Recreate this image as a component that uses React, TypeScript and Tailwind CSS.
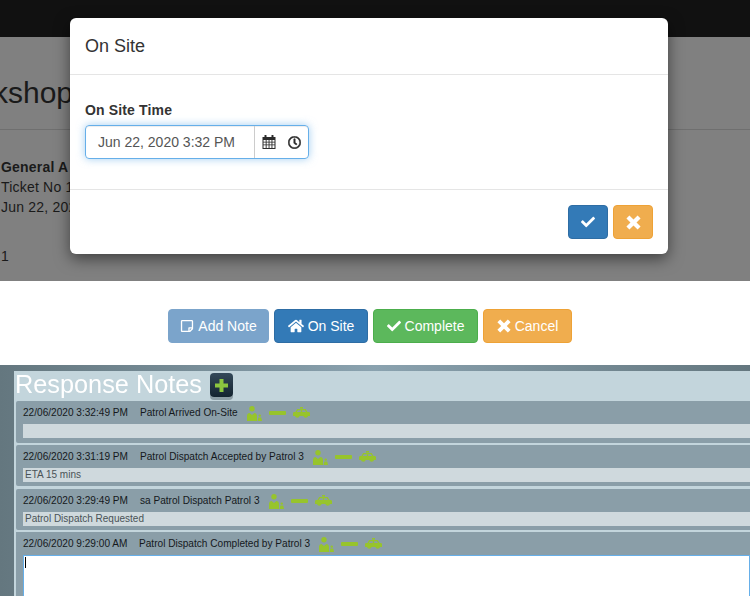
import React from "react";
import { FaCheck, FaHome, FaRegClock, FaRegStickyNote } from "react-icons/fa";

function Calendar() {
  return (
    <svg width="14" height="14" viewBox="0 0 14 14" fill="#2b2b2b">
      <rect x="2.5" y="0" width="2" height="3" rx="0.6" />
      <rect x="9.5" y="0" width="2" height="3" rx="0.6" />
      <path d="M0.5 2h13v12h-13z M1.5 5v1.7h2.2V5z M4.6 5v1.7h2V5z M7.5 5v1.7h2V5z M10.4 5v1.7h2.1V5z M1.5 7.6v1.8h2.2V7.6z M4.6 7.6v1.8h2V7.6z M7.5 7.6v1.8h2V7.6z M10.4 7.6v1.8h2.1V7.6z M1.5 10.3V13h2.2v-2.7z M4.6 10.3V13h2v-2.7z M7.5 10.3V13h2v-2.7z M10.4 10.3V13h2.1v-2.7z" fillRule="evenodd" />
    </svg>
  );
}

function BoldX({ size }: { size: number }) {
  return (
    <svg width={size} height={size} viewBox="0 0 14 14" fill="currentColor">
      <path d="M3.2 0.4 7 4.2 10.8 0.4 13.6 3.2 9.8 7 13.6 10.8 10.8 13.6 7 9.8 3.2 13.6 0.4 10.8 4.2 7 0.4 3.2z" />
    </svg>
  );
}

function StatusIcons() {
  return (
    <div className="flex items-center gap-[7px] ml-[9px] blur-[0.4px]">
      <svg width="15" height="15" viewBox="0 0 15 15" fill="#97c42c">
        <circle cx="5" cy="2.7" r="2.7" />
        <path d="M0 15V10c0-2 1.2-3 2.6-3l2.4 2 2.4-2C8.8 7 10 8 10 10v5z" />
        <circle cx="12.8" cy="9.6" r="1.2" />
        <path d="M11.4 11.4h2.8l.8 3.6h-4.4z" />
      </svg>
      <div className="w-[17px] h-[4px] rounded-[1px] bg-[#97c42c]" />
      <svg width="17" height="12" viewBox="0 0 17 12" fill="#97c42c">
        <rect x="7" y="0" width="3" height="1.6" />
        <path
          fillRule="evenodd"
          d="M4.2 2h8.4l1.9 3h1.1c.8 0 1.4.6 1.4 1.3V9H0V6.3C0 5.6.6 5 1.4 5h1zM5 3.2 3.8 5h4V3.2zM9.2 3.2V5h3.8l-1.1-1.8z"
        />
        <path d="M1.8 8.8a2.6 2.6 0 0 0 5 0z" />
        <path d="M10.2 8.8a2.6 2.6 0 0 0 5 0z" />
      </svg>
    </div>
  );
}

function Note({ time, text, bar, cls }: { time: string; text: string; bar?: string; cls: string }) {
  return (
    <div className={`bg-[#8a9ea8] rounded-l-[2px] pl-[7px] ${cls}`}>
      <div className="h-[23px] pt-[1px] flex items-center text-[10.1px] text-[#15191c] whitespace-nowrap">
        <span className="w-[117px]">{time}</span>
        <span>{text}</span>
        <StatusIcons />
      </div>
      <div className="h-[14px] bg-[#cfd9dd] pl-[2px] text-[10px] leading-[13px] text-[#4a5357] overflow-hidden whitespace-nowrap">
        {bar}
      </div>
    </div>
  );
}

const btn = "h-[34px] rounded-[4px] border text-white text-[14px] flex items-center justify-center gap-[4px]";

export default function App() {
  return (
    <div className="relative w-[750px] h-[596px] overflow-hidden bg-white font-['Liberation_Sans',Arial,sans-serif] text-[14px]">
      {/* dimmed page */}
      <div className="h-[281px] bg-[#808080] text-[#1a1a1a] overflow-hidden">
        <div className="h-[37px] bg-[#111111]" />
        <div className="h-[93px] border-b border-[#6f6f6f] pt-[36px] -ml-[7px] text-[30px] leading-[40px] whitespace-nowrap">
          kshop
        </div>
        <div className="pt-[27px] pl-[1px] leading-[20px] tracking-[0.2px] whitespace-nowrap">
          <div className="font-bold">General A</div>
          <div>Ticket No 1</div>
          <div>Jun 22, 2020</div>
          <div className="mt-[29px]">1</div>
        </div>
      </div>

      {/* action buttons */}
      <div className="h-[84px] flex items-start justify-center gap-[5px] pt-[28px] pr-[10px]">
        <button className={`${btn} w-[101px] bg-[#7ba4cb] border-[#7ba4cb]`}>
          <FaRegStickyNote size={14} />
          Add Note
        </button>
        <button className={`${btn} w-[94px] bg-[#337ab7] border-[#2e6da4]`}>
          <FaHome size={16} />
          On Site
        </button>
        <button className={`${btn} w-[105px] bg-[#5cb85c] border-[#4cae4c]`}>
          <FaCheck size={14} />
          Complete
        </button>
        <button className={`${btn} w-[89px] bg-[#f0ad4e] border-[#eea236]`}>
          <BoldX size={14} />
          Cancel
        </button>
      </div>

      {/* response notes */}
      <div className="h-[231px] bg-gradient-to-r from-[#64777f] via-[#8aa2af] to-[#64777f] pt-[6px] pl-[14px] overflow-hidden">
        <div className="h-full bg-[#c3d5dc] pl-[2px]">
          <div className="h-[30px] pb-[4px] flex items-center gap-[8px] -ml-[1px]">
            <span className="text-[25.3px] text-white leading-[26px] blur-[0.3px]">Response Notes</span>
            <span className="mt-[2px] w-[23px] h-[24px] rounded-[4px] bg-gradient-to-b from-[#34495a] to-[#142430] flex items-center justify-center shadow-[0_3px_0_#8d9ea6]">
              <svg width="13" height="13" viewBox="0 0 13 13" fill="#8cc63f">
                <path d="M4.5 0h4v4.5H13v4H8.5V13h-4V8.5H0v-4h4.5z" />
              </svg>
            </span>
          </div>
          <Note cls="h-[42px] mb-[2px]" time="22/06/2020 3:32:49 PM" text="Patrol Arrived On-Site" />
          <Note cls="h-[41px] mb-[3px]" time="22/06/2020 3:31:19 PM" text="Patrol Dispatch Accepted by Patrol 3" bar="ETA 15 mins" />
          <Note cls="h-[41px] mb-[2px]" time="22/06/2020 3:29:49 PM" text="sa Patrol Dispatch Patrol 3" bar="Patrol Dispatch Requested" />
          <div className="h-[70px] bg-[#8a9ea8] pl-[7px]">
            <div className="h-[23px] pt-[1px] flex items-center text-[10.1px] text-[#15191c] whitespace-nowrap">
              <span className="w-[116px]">22/06/2020 9:29:00 AM</span>
              <span>Patrol Dispatch Completed by Patrol 3</span>
              <StatusIcons />
            </div>
            <div className="h-[60px] bg-white border border-[#66afe9] pl-[1px] pt-[1px]">
              <div className="w-[1px] h-[11px] bg-black" />
            </div>
          </div>
        </div>
      </div>

      {/* modal */}
      <div className="absolute left-[70px] top-[18px] w-[598px] h-[236px] bg-white rounded-[6px] shadow-[0_5px_15px_rgba(0,0,0,0.5)] text-[#333333]">
        <div className="h-[57px] border-b border-[#e5e5e5] pl-[15px] flex items-center text-[18px]">On Site</div>
        <div className="h-[115px] border-b border-[#e5e5e5] pt-[27px] pl-[15px]">
          <div className="font-bold leading-[17px] tracking-[0.15px] mb-[6px]">On Site Time</div>
          <div className="w-[224px] h-[34px] flex rounded-[4px] border border-[#66afe9] shadow-[inset_0_1px_1px_rgba(0,0,0,0.075),0_0_8px_rgba(102,175,233,0.6)]">
            <div className="w-[168px] pl-[12px] flex items-center text-[#555555] whitespace-nowrap">Jun 22, 2020 3:32 PM</div>
            <div className="flex-1 border-l border-[#cccccc] flex items-center pl-[7px] gap-[12px] text-[#2b2b2b]">
              <Calendar />
              <FaRegClock size={13} strokeWidth={20} />
            </div>
          </div>
        </div>
        <div className="flex justify-end gap-[5px] pt-[15px] pr-[15px]">
          <button className="w-[40px] h-[34px] rounded-[4px] bg-[#337ab7] border border-[#2e6da4] text-white flex items-center justify-center">
            <FaCheck size={14} />
          </button>
          <button className="w-[40px] h-[34px] rounded-[4px] bg-[#f0ad4e] border border-[#eea236] text-white flex items-center justify-center">
            <BoldX size={15} />
          </button>
        </div>
      </div>
    </div>
  );
}
